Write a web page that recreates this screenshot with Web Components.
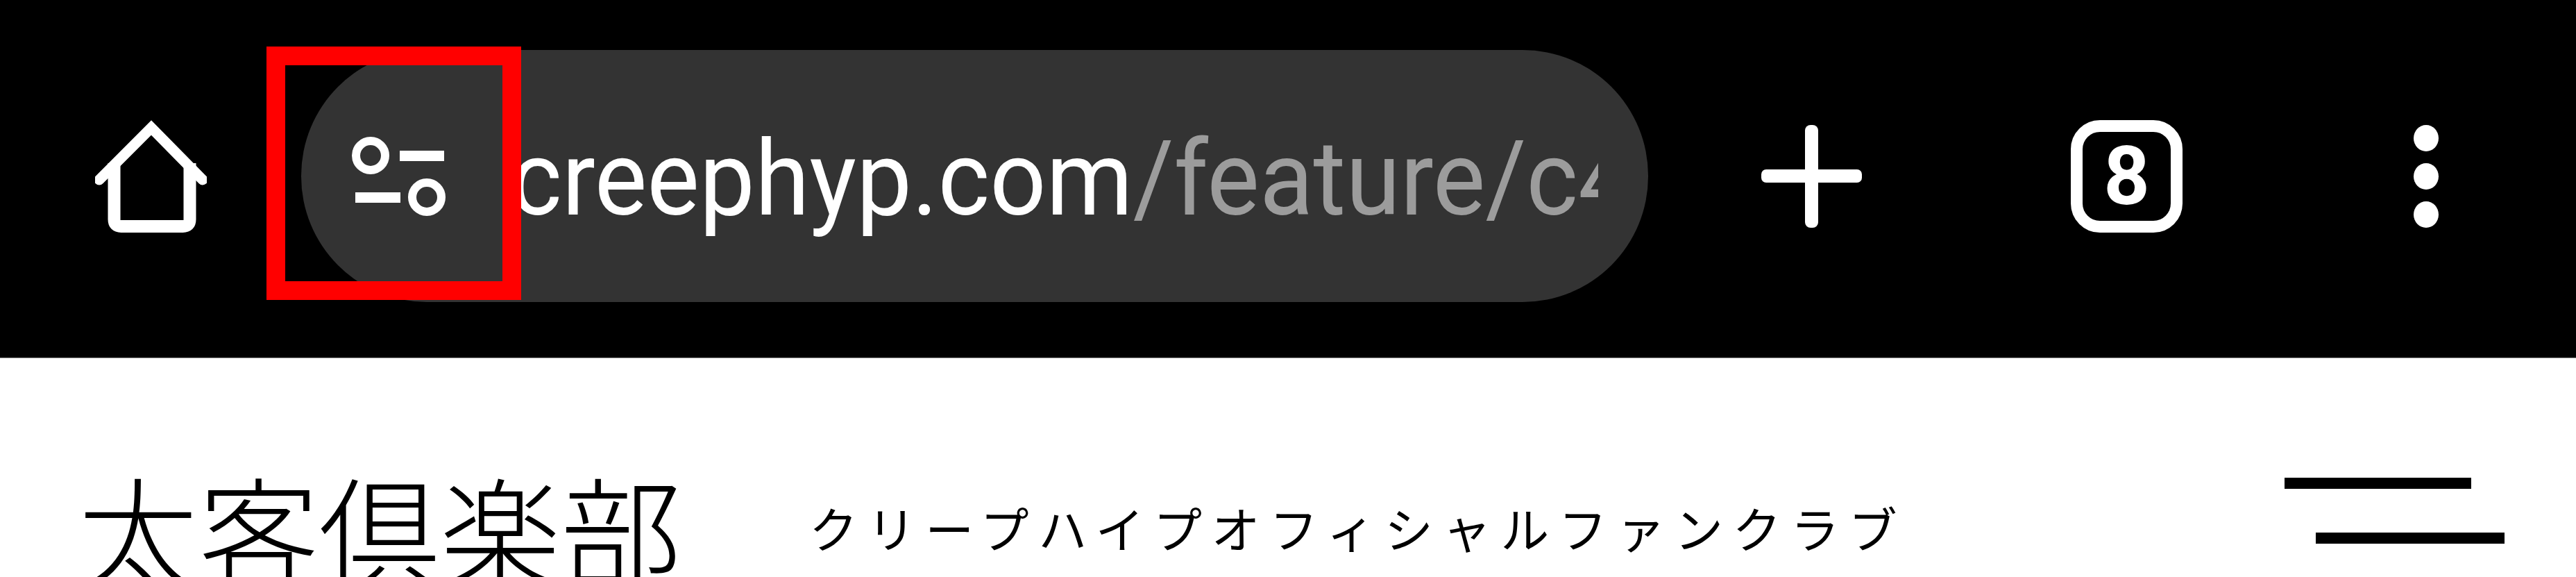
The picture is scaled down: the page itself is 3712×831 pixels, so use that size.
<!DOCTYPE html>
<html lang="ja">
<head>
<meta charset="utf-8">
<title>太客倶楽部</title>
<style>
    html, body { margin: 0; background: #fff; }
    body { width: 3712px; height: 831px; overflow: hidden; }
</style>
</head>
<body>
<browser-bar>
    <home-icon></home-icon>
    <url-pill host-name="creephyp.com" path-name="/feature/c4j2k9"></url-pill>
    <plus-icon></plus-icon>
    <tab-count count="8"></tab-count>
    <more-icon></more-icon>
</browser-bar>
<site-header logo="太客倶楽部" tagline="クリープハイプオフィシャルファンクラブ"></site-header>

<script>
class BrowserBar extends HTMLElement {

    constructor() {
        super()
        this.attachShadow({ mode: 'open' })
    }

    connectedCallback() {
        this.shadowRoot.innerHTML = `
        <style>
            :host {
                display: flex;
                position: relative;
                align-items: center;
                box-sizing: border-box;
                height: 516px;
                padding: 0 0 8px 137px;
                background: #000;
                border-bottom: 1px solid #9a9a9a;
            }
            /* the red box lies over the pill */
            .marker {
                position: absolute;
                left: 384px;
                top: 67px;
                width: 367px;
                height: 365px;
                box-sizing: border-box;
                border: 27px solid #ff0000;
            }
        </style>
        <slot></slot>
        <div class="marker"></div>
        `
    }
}

class HomeIcon extends HTMLElement {

    constructor() {
        super()
        this.attachShadow({ mode: 'open' })
    }

    connectedCallback() {
        this.shadowRoot.innerHTML = `
        <style>
            :host { display: block; width: 161px; height: 162px; }
            svg { display: block; }
        </style>
        <svg width="161" height="162" viewBox="0 0 161 162" fill="none" stroke="#fff">
            <path d="M6 86 L81 11 L155 86" stroke-width="15" stroke-linecap="round" stroke-linejoin="miter"/>
            <path d="M27.5 62 V143 Q27.5 153 37.5 153 H126.5 Q136.5 153 136.5 143 V62" stroke-width="18"/>
        </svg>
        `
    }
}

class UrlPill extends HTMLElement {

    constructor() {
        super()
        this.attachShadow({ mode: 'open' })
    }

    connectedCallback() {
        this.shadowRoot.innerHTML = `
        <style>
            :host {
                display: flex;
                align-items: center;
                box-sizing: border-box;
                width: 1941px;
                height: 363px;
                margin-left: 136px;
                padding: 0 72px 0 73px;
                border-radius: 181px;
                background: #333;
            }
            svg { display: block; flex: none; }
            .url {
                flex: 1;
                min-width: 0;
                margin: 8px 0 0 90px;
                overflow: hidden;
                white-space: nowrap;
                font: 400 142.6px/200px Roboto, sans-serif;
                color: #fff;
                transform: scaleY(1.06);
            }
            .path { color: #9c9c9c; }
        </style>
        <svg width="138" height="114" viewBox="0 0 138 114" fill="none" stroke="#fff">
            <ellipse cx="27" cy="27" rx="21" ry="21" stroke-width="12"/>
            <rect x="69" y="20" width="64" height="15" fill="#fff" stroke="none"/>
            <rect x="5" y="80" width="65" height="15" fill="#fff" stroke="none"/>
            <ellipse cx="108" cy="87" rx="21" ry="21" stroke-width="12"/>
        </svg>
        <div class="url">${this.getAttribute('host-name')}<span class="path">${this.getAttribute('path-name')}</span></div>
        `
    }
}

class PlusIcon extends HTMLElement {

    constructor() {
        super()
        this.attachShadow({ mode: 'open' })
    }

    connectedCallback() {
        this.shadowRoot.innerHTML = `
        <style>
            :host { display: block; width: 145px; height: 148px; margin-left: 163px; }
            svg { display: block; }
        </style>
        <svg width="145" height="148" viewBox="0 0 145 148" fill="#fff">
            <rect x="0" y="64" width="145" height="19" rx="7"/>
            <rect x="63" y="0" width="19" height="148" rx="8"/>
        </svg>
        `
    }
}

class TabCount extends HTMLElement {

    constructor() {
        super()
        this.attachShadow({ mode: 'open' })
    }

    connectedCallback() {
        this.shadowRoot.innerHTML = `
        <style>
            :host {
                display: flex;
                align-items: center;
                justify-content: center;
                box-sizing: border-box;
                width: 161px;
                height: 162px;
                margin-left: 301px;
                border: 17px solid #fff;
                border-radius: 42px;
                font: 700 116px/1 Roboto, sans-serif;
                color: #fff;
            }
        </style>
        ${this.getAttribute('count')}
        `
    }
}

class MoreIcon extends HTMLElement {

    constructor() {
        super()
        this.attachShadow({ mode: 'open' })
    }

    connectedCallback() {
        this.shadowRoot.innerHTML = `
        <style>
            :host {
                display: flex;
                flex-direction: column;
                gap: 17px;
                width: 36px;
                margin-left: 333px;
            }
            i { display: block; height: 38px; border-radius: 50%; background: #fff; }
        </style>
        <i></i><i></i><i></i>
        `
    }
}

class SiteHeader extends HTMLElement {

    constructor() {
        super()
        this.attachShadow({ mode: 'open' })
    }

    connectedCallback() {
        this.shadowRoot.innerHTML = `
        <style>
            :host {
                display: flex;
                align-items: flex-start;
                height: 315px;
                padding-left: 112px;
                overflow: hidden;
                background: #fff;
                color: #000;
                font-family: "Noto Sans CJK JP", sans-serif;
            }
            .logo {
                flex: none;
                margin-top: 156px;
                font-size: 174px;
                line-height: 1;
                font-weight: 300;
            }
            .tagline {
                flex: none;
                margin: 209px 0 0 184px;
                font-size: 70px;
                line-height: 1;
                letter-spacing: 13.6px;
                font-weight: 400;
            }
            .menu {
                display: flex;
                flex-direction: column;
                gap: 63px;
                margin: 172px 103px 0 auto;
            }
            .menu i { display: block; height: 16px; width: 269px; background: #000; }
            .menu i + i { width: 272px; margin-left: 45px; }
        </style>
        <div class="logo">${this.getAttribute('logo')}</div>
        <div class="tagline">${this.getAttribute('tagline')}</div>
        <div class="menu"><i></i><i></i></div>
        `
    }
}

customElements.define('browser-bar', BrowserBar);
customElements.define('home-icon', HomeIcon);
customElements.define('url-pill', UrlPill);
customElements.define('plus-icon', PlusIcon);
customElements.define('tab-count', TabCount);
customElements.define('more-icon', MoreIcon);
customElements.define('site-header', SiteHeader);
</script>
</body>
</html>
